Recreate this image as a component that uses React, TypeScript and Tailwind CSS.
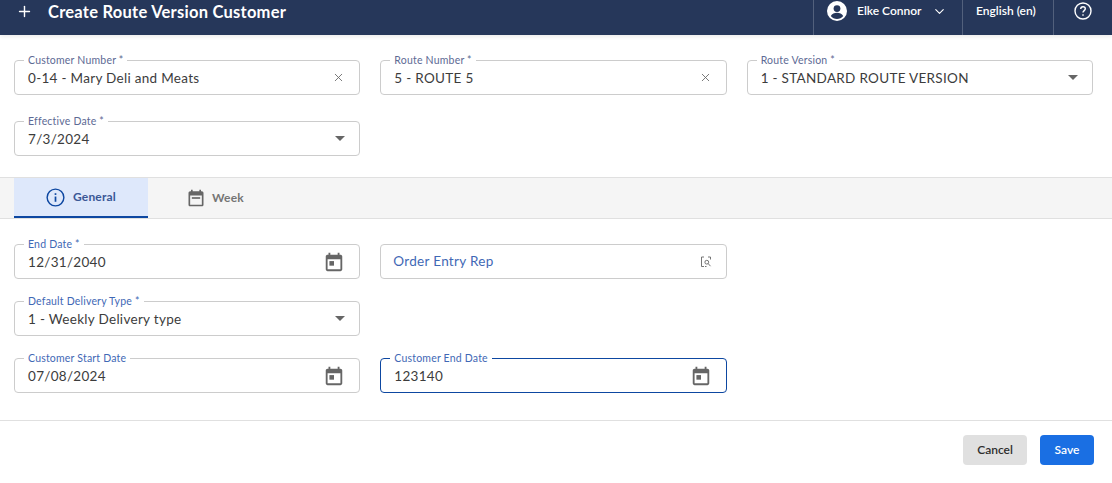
import { ChevronDown, Plus, X } from "lucide-react";
import type { ReactNode } from "react";

const font = "font-['Lato','Noto_Sans',sans-serif]";

function CalendarIcon({ className = "" }: { className?: string }) {
    return (
        <svg viewBox="0 0 24 24" width="22" height="22" className={className} fill="#666">
            <path d="M19 4h-1V2h-2v2H8V2H6v2H5c-1.1 0-2 .9-2 2v14c0 1.1.9 2 2 2h14c1.1 0 2-.9 2-2V6c0-1.1-.9-2-2-2zm0 16H5V9h14v11z" />
            <rect x="7" y="11" width="5" height="5" />
        </svg>
    );
}

function WeekIcon() {
    return (
        <svg viewBox="0 0 24 24" width="20" height="20" fill="#666">
            <path d="M19 4h-1V2h-2v2H8V2H6v2H5c-1.1 0-2 .9-2 2v14c0 1.1.9 2 2 2h14c1.1 0 2-.9 2-2V6c0-1.1-.9-2-2-2zm0 16H5V9h14v11z" />
            <rect x="7" y="11" width="10" height="2" />
        </svg>
    );
}

function Caret() {
    return <span className="w-0 h-0 border-x-[5px] border-x-transparent border-t-[5px] border-t-[#666]" />;
}

function LookupIcon() {
    return (
        <svg viewBox="0 0 12 12" width="12" height="12" fill="none" stroke="#666" strokeWidth="0.9">
            <path d="M4 1H1.5v9.5H4M8 1h2.5v2.5" />
            <circle cx="6.8" cy="6.2" r="1.9" />
            <path d="M8.2 7.6l2.3 2.6M5 10.5h1.5" />
        </svg>
    );
}

function Clear() {
    return <X size={13} strokeWidth={1.6} className="text-[#666]" />;
}

function Field({
    label,
    value,
    icon,
    blue,
    focused,
}: {
    label: string;
    value: string;
    icon?: ReactNode;
    blue?: boolean;
    focused?: boolean;
}) {
    return (
        <div
            className={`relative h-[35px] rounded border bg-white flex items-center justify-between pl-[13px] pr-[14px] ${
                focused ? "border-[#0d47a1]" : "border-[#cccccc]"
            }`}
        >
            <span
                className={`absolute left-[9px] -top-[6px] bg-white px-1 text-[10.5px] leading-[11px] tracking-[0.2px] ${
                    blue ? "text-[#3f68b5]" : "text-[#5d6a94]"
                }`}
            >
                {label}
            </span>
            <span className="pt-[1px] text-[13.5px] leading-[18px] tracking-[0.3px] text-[#3c3c3c]">{value}</span>
            {icon}
        </div>
    );
}

export default function App() {
    return (
        <div className={`${font} w-[1112px] h-[483px] overflow-hidden bg-white flex flex-col`}>
            {/* Header */}
            <header className="h-[35px] shrink-0 bg-[#26375a] flex items-center text-white shadow-[0_2px_4px_rgba(0,0,0,0.08)]">
                <Plus size={17} strokeWidth={2} className="ml-4 -mt-[12px]" />
                <h1 className="ml-[15px] -mt-[12px] text-[16.5px] leading-[22px] font-bold tracking-[0.25px]">
                    Create Route Version Customer
                </h1>
                <div className="ml-auto flex h-full text-[12px] font-semibold">
                    <div className="w-[149px] border-l border-[#52607c] flex items-start pt-[1px] pl-[13px]">
                        <svg viewBox="0 0 20 20" width="20" height="20" className="shrink-0">
                            <circle cx="10" cy="10" r="10" fill="#fff" />
                            <circle cx="10" cy="7.6" r="3.4" fill="#26375a" />
                            <path d="M3.8 15c1.3-2.4 3.6-3.3 6.2-3.3s4.900.9 6.200 3.300c-1.400 1.800-3.700 3-6.200 3s-4.800-1.200-6.200-3z" fill="#26375a" />
                        </svg>
                        <span className="ml-[10px] mt-[3px] leading-[14px]">Elke Connor</span>
                        <ChevronDown size={15} strokeWidth={1.8} className="ml-[10px] mt-[3px]" />
                    </div>
                    <div className="w-[91px] border-l border-[#52607c] pl-[13px] pt-[4px] leading-[14px]">English (en)</div>
                    <div className="w-[59px] border-l border-[#52607c] pl-5 pt-[2px]">
                        <svg viewBox="0 0 18 18" width="18" height="18" fill="none" stroke="#fff" strokeWidth="1.4">
                            <circle cx="9" cy="9" r="8" />
                            <path d="M6.700 7c0-1.400 1-2.300 2.300-2.300s2.300.9 2.300 2.100c0 1.700-2.300 1.900-2.300 3.700" />
                            <path d="M9 12.300v1.500" />
                        </svg>
                    </div>
                </div>
            </header>

            {/* Top fields */}
            <section className="grid grid-cols-3 gap-x-5 gap-y-[26px] pl-[14px] pr-[19px] pt-[25px] pb-[21px]">
                <Field label="Customer Number *" value="0-14 - Mary Deli and Meats" icon={<Clear />} />
                <Field label="Route Number *" value="5 - ROUTE 5" icon={<Clear />} />
                <Field label="Route Version *" value="1 - STANDARD ROUTE VERSION" icon={<Caret />} />
                <Field label="Effective Date *" value="7/3/2024" icon={<Caret />} />
            </section>

            {/* Tabs */}
            <nav className="h-[42px] shrink-0 bg-[#f5f5f5] border-y border-[#e0e0e0] pl-[14px] flex text-[12px] font-bold tracking-[0.2px]">
                <div className="w-[134px] bg-[#deE8fb] border-b-2 border-[#0d47a1] flex items-center justify-center gap-2 text-[#3a5796]">
                    <svg viewBox="0 0 20 20" width="19" height="19" fill="none" stroke="#0d47a1" strokeWidth="1.5">
                        <circle cx="10" cy="10" r="8.800" />
                        <path d="M10 9v5.500" strokeWidth="1.800" />
                        <path d="M10 5.500v1.800" strokeWidth="1.800" />
                    </svg>
                    General
                </div>
                <div className="w-[134px] flex items-center justify-center gap-[6px] text-[#757575]">
                    <WeekIcon />
                    Week
                </div>
            </nav>

            {/* General tab */}
            <section className="grid grid-cols-3 gap-x-5 gap-y-[22px] pl-[14px] pr-[19px] pt-[25px] pb-[27px] border-b border-[#e0e0e0]">
                <Field label="End Date *" value="12/31/2040" blue icon={<CalendarIcon />} />
                <div className="h-[35px] rounded border border-[#cccccc] flex items-center justify-between pl-[12px] pr-[14px] text-[13.5px] tracking-[0.3px] text-[#3f68b5]">
                    Order Entry Rep
                    <LookupIcon />
                </div>
                <div />
                <Field label="Default Delivery Type *" value="1 - Weekly Delivery type" blue icon={<Caret />} />
                <div className="col-span-2" />
                <Field label="Customer Start Date" value="07/08/2024" blue icon={<CalendarIcon />} />
                <Field label="Customer End Date" value="123140" blue focused icon={<CalendarIcon />} />
            </section>

            {/* Footer */}
            <footer className="flex justify-end gap-[13px] pt-[14px] pr-[18px] text-[12px] font-semibold">
                <button className="w-16 h-[30px] rounded bg-[#e0e0e0] text-[#2d2d2d]">Cancel</button>
                <button className="w-[54px] h-[30px] rounded bg-[#1a6fe3] text-white">Save</button>
            </footer>
        </div>
    );
}
